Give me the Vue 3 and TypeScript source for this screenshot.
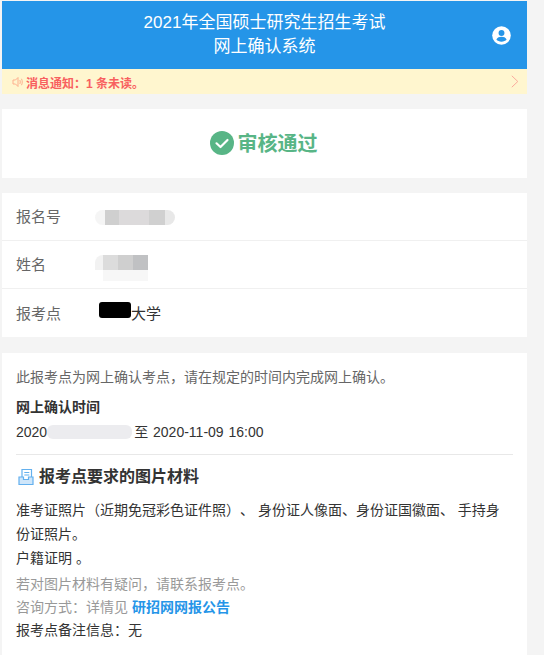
<script setup lang="ts">
const rows = ['报名号', '姓名', '报考点']
</script>

<template>
  <div class="page">
    <header class="header">
      <div class="title">2021年全国硕士研究生招生考试<br />网上确认系统</div>
      <svg class="user" viewBox="0 0 20 20" width="19" height="19">
        <circle cx="10" cy="10" r="9.800" fill="#fff" />
        <circle cx="10" cy="7.400" r="3.100" fill="#2595e8" />
        <path d="M4.600 14.200c1-2.200 3.200-2.900 5.400-2.900s4.400.7 5.400 2.900c-1.200 1.400-3.200 2.300-5.400 2.300s-4.200-.9-5.400-2.300z" fill="#2595e8" />
      </svg>
    </header>
    <div class="notice">
      <svg class="horn" viewBox="0 0 12 12" width="12" height="12" fill="none" stroke="#fdb08e" stroke-width="1">
        <path d="M1 4h2.500L6 1.500v9L3.500 8H1z" />
        <path d="M7.800 4c.6 1.200.6 2.800 0 4M9.500 2.800c1 2 1 4.400 0 6.400" />
      </svg>
      <span class="notice-text">消息通知：1 条未读。</span>
      <svg class="chev" viewBox="0 0 8 13" width="8" height="13" fill="none" stroke="#fba99c" stroke-width="1">
        <path d="M.8.8 6.800 6.500.8 12.200" />
      </svg>
    </div>

    <section class="card status">
      <svg viewBox="0 0 24 24" width="24" height="24">
        <circle cx="12" cy="12" r="12" fill="#58b586" />
        <path d="M6.500 12.300 10.500 16 17.500 9" fill="none" stroke="#fff" stroke-width="2.200" stroke-linecap="round" stroke-linejoin="round" />
      </svg>
      <span>审核通过</span>
    </section>

    <section class="card info">
      <div v-for="(label, i) in rows" :key="label" class="row">
        <span class="label">{{ label }}</span>
        <span v-if="i === 0" class="blur blur-id"></span>
        <span v-else-if="i === 1" class="blur blur-name"></span>
        <span v-else class="school"><i class="black"></i>大学</span>
      </div>
    </section>

    <section class="card detail">
      <p class="intro">此报考点为网上确认考点，请在规定的时间内完成网上确认。</p>
      <p class="time-label">网上确认时间</p>
      <p class="time">2020<i class="blur blur-time"></i>至 2020-11-09 16:00</p>
      <h2 class="heading">
        <svg viewBox="0 0 16 18" width="16" height="18" fill="none" stroke="#63b0ee" stroke-width="1.200">
          <path d="M4 9V1.500h9.500V9M6.300 4.500h5M6.300 7h5" />
          <path d="M1 9h4.500v2.500h5V9H15v7.500H1z" fill="#cfe6fa" />
        </svg>
        报考点要求的图片材料
      </h2>
      <p class="materials first">准考证照片（近期免冠彩色证件照）、 身份证人像面、身份证国徽面、 手持身份证照片。</p>
      <p class="materials">户籍证明 。</p>
      <p class="muted hint">若对图片材料有疑问，请联系报考点。</p>
      <p class="muted">咨询方式：详情见 <a class="link">研招网网报公告</a></p>
      <p class="remark">报考点备注信息：无</p>
    </section>
  </div>
</template>

<style scoped>
.page {
  box-sizing: border-box;
  width: 544px;
  height: 655px;
  overflow: hidden;
  padding: 1px 17px 0 2px;
  background: #f4f4f4;
  font-family: "Liberation Sans", "Noto Sans CJK SC", sans-serif;
  color: #333;
  text-spacing-trim: space-all;
}
.header {
  position: relative;
  height: 68px;
  display: flex;
  align-items: center;
  justify-content: center;
  background: #2595e8;
  color: #fff;
}
.title {
  font-size: 17px;
  line-height: 24px;
  text-align: center;
}
.user {
  position: absolute;
  right: 16px;
  top: 25px;
}
.notice {
  height: 25px;
  display: flex;
  align-items: center;
  padding: 0 8px 0 10px;
  background: #fff6cf;
}
.horn {
  margin-right: 2px;
}
.notice-text {
  flex: 1;
  padding-top: 2px;
  font-size: 12px;
  font-weight: 700;
  color: #f8605f;
}
.card {
  background: #fff;
  margin-top: 15px;
}
.status {
  height: 69px;
  box-sizing: border-box;
  padding-bottom: 2px;
  display: flex;
  align-items: center;
  justify-content: center;
  gap: 4px;
  font-size: 20px;
  font-weight: 700;
  color: #58b586;
}
.status svg {
  margin-left: -2px;
}
.info {
  height: 144px;
}
.row {
  height: 48px;
  box-sizing: border-box;
  display: flex;
  align-items: center;
  padding-left: 14px;
  padding-bottom: 2px;
  font-size: 15px;
  border-bottom: 1px solid #f0f0f0;
}
.row:last-child {
  border-bottom: 0;
}
.label {
  width: 79px;
  color: #666;
}
.school {
  display: flex;
  align-items: center;
  margin-left: 4px;
  color: #333;
}
.blur {
  display: inline-block;
}
.blur-id {
  width: 80px;
  height: 15px;
  margin-top: 3px;
  border-radius: 8px;
  background: linear-gradient(90deg, #f5f5f5 0 12%, #cfcfcf 12% 30%, #dcdadb 30% 68%, #d0d0d0 68% 88%, #e8e8e8 88%);
}
.blur-name {
  width: 53px;
  height: 26px;
  margin-top: 8px;
  border-radius: 8px 0 0 8px;
  background:
    linear-gradient(90deg, #f2f2f2 0 15%, #dcdcdc 15% 43%, #cfcfcf 43% 72%, #c0c1c3 72%) top / 100% 15px no-repeat,
    linear-gradient(90deg, #fff 0 15%, #f7f7f7 15%) bottom / 100% 11px no-repeat;
}
.black {
  display: inline-block;
  width: 32px;
  height: 16px;
  margin-top: -4px;
  border-radius: 3px;
  background: #000;
}
.detail {
  height: 320px;
  margin-top: 16px;
  padding: 14px 14px 0;
  font-size: 14px;
  color: #333;
}
p {
  margin: 0;
}
.intro {
  line-height: 20px;
  color: #666;
}
.time-label {
  margin-top: 10px;
  font-weight: 700;
  line-height: 20px;
}
.time {
  display: flex;
  align-items: center;
  margin-top: 5px;
  padding-bottom: 12px;
  line-height: 20px;
  word-spacing: 1px;
  border-bottom: 1px solid #e8e8e8;
}
.blur-time {
  width: 85px;
  height: 14px;
  margin-right: 2px;
  border-radius: 6px;
  background: #ececef;
}
.heading {
  display: flex;
  align-items: center;
  gap: 5px;
  margin: 0;
  padding: 10px 0 0 2px;
  font-size: 16px;
  font-weight: 700;
  line-height: 24px;
  color: #333;
}
.materials {
  line-height: 24px;
}
.first {
  margin-top: 9px;
}
.muted {
  line-height: 23px;
  color: #999;
}
.hint {
  margin-top: 3px;
}
.link {
  color: #2595e8;
  font-weight: 700;
}
.remark {
  line-height: 22px;
}
</style>
